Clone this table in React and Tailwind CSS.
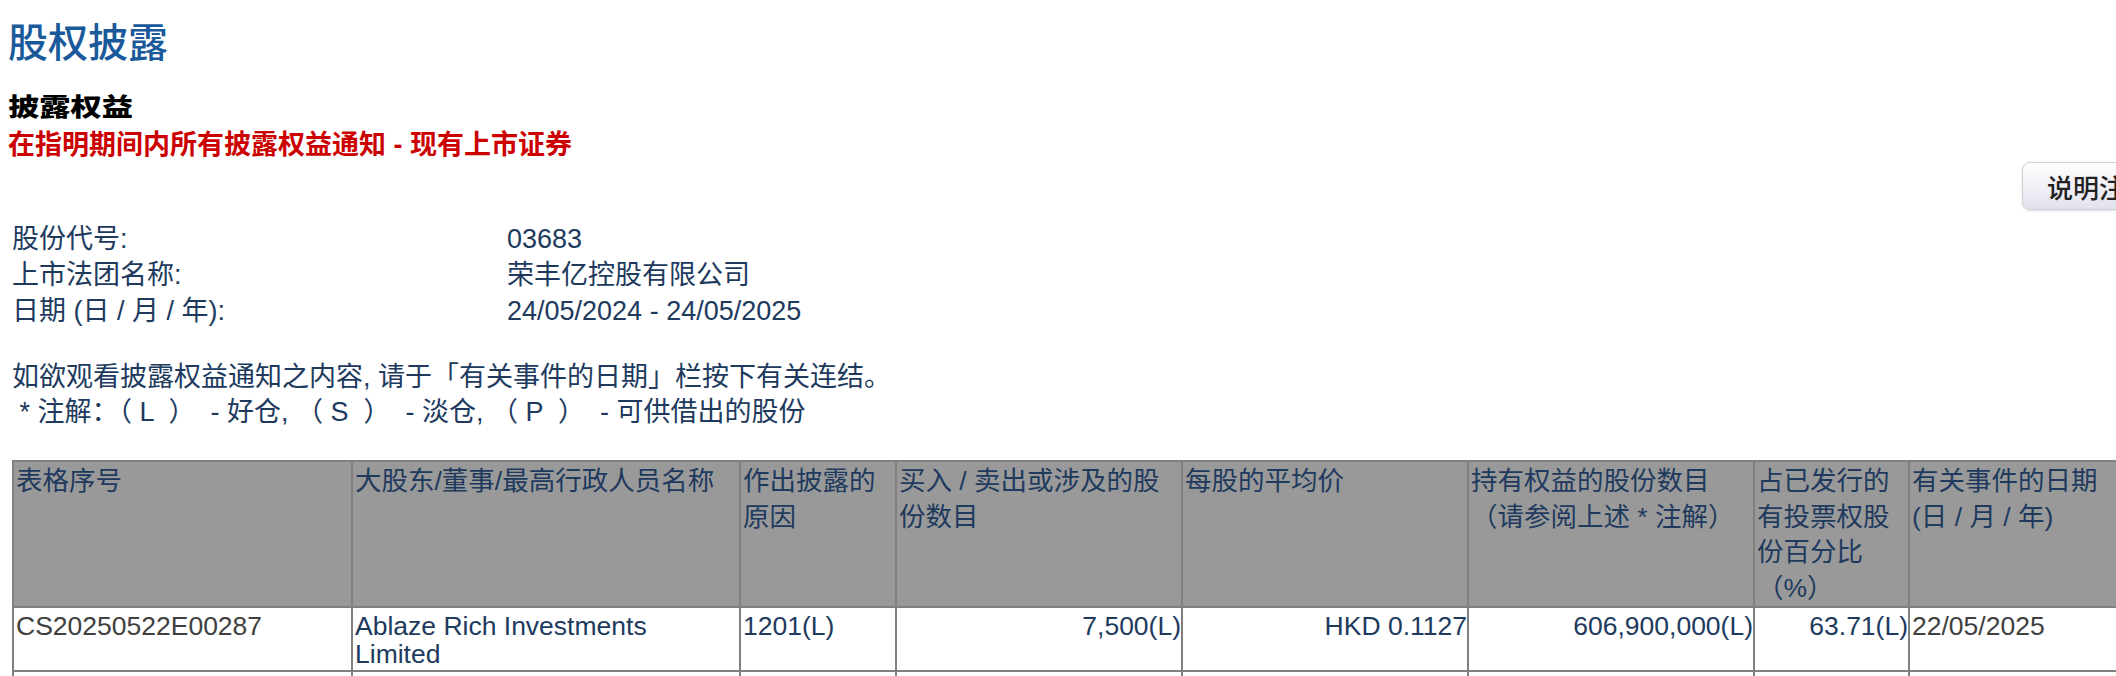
import React from 'react';

const COLS = 'grid-cols-[337px_386px_154px_284px_284px_284px_153px_240px]';

const headers = [
  '表格序号',
  '大股东/董事/最高行政人员名称',
  '作出披露的原因',
  '买入 / 卖出或涉及的股份数目',
  '每股的平均价',
  '持有权益的股份数目（请参阅上述 * 注解）',
  '占已发行的有投票权股份百分比（%）',
  null,
];

const row = [
  { v: 'CS20250522E00287', cls: 'text-[#404040]' },
  { v: 'name', cls: '' },
  { v: '1201(L)', cls: '' },
  { v: '7,500(L)', cls: 'text-right' },
  { v: 'HKD 0.1127', cls: 'text-right' },
  { v: '606,900,000(L)', cls: 'text-right' },
  { v: '63.71(L)', cls: 'text-right' },
  { v: '22/05/2025', cls: 'text-[#404040]' },
];

export default function App() {
  return (
    <div className="w-full overflow-hidden bg-white font-['Liberation_Sans','Noto_Sans_CJK_SC',sans-serif] text-[#203a5e]">
      <div className="w-[2190px] pl-[8px] pr-[14px]">
        <h1 className="pt-[20px] font-['Noto_Sans_CJK_SC',sans-serif] text-[40px] font-medium leading-[40px] text-[#1a5a9a]">
          股权披露
        </h1>
        <h2 className="mt-[33px] h-[25px] font-['Noto_Sans_CJK_SC',sans-serif] text-[25px] font-black leading-[25px] text-black">
          <span className="inline-block origin-left scale-x-125">披露权益</span>
        </h2>
        <p className="mt-[14px] text-[27px] font-bold leading-[27px] text-[#cc0000]">
          在指明期间内所有披露权益通知 - 现有上市证券
        </p>

        <div className="mt-[3px] flex justify-end">
          <button className="h-[48px] rounded-lg border border-[#cfcfd8] bg-linear-to-b from-white to-[#e2e2ee] px-[24px] font-['Noto_Sans_CJK_SC',sans-serif] text-[26px] font-medium text-[#222] shadow-sm">
            说明注释
          </button>
        </div>

        {/* stock info */}
        <div className="ml-[4px] mt-[11px] grid grid-cols-[495px_auto] text-[27px] leading-[36px]">
          <div>股份代号:</div>
          <div>03683</div>
          <div>上市法团名称:</div>
          <div>荣丰亿控股有限公司</div>
          <div>日期 (日 / 月 / 年):</div>
          <div>24/05/2024 - 24/05/2025</div>
        </div>

        <div className="ml-[4px] mt-[31px] whitespace-pre text-[27px] leading-[35px]">
          <p>如欲观看披露权益通知之内容, 请于「有关事件的日期」栏按下有关连结。</p>
          <p> * 注解：（ L  ）  - 好仓, （ S  ）  - 淡仓, （ P  ）  - 可供借出的股份</p>
        </div>

        {/* disclosure table */}
        <div className={`ml-[4px] mt-[30px] grid w-max ${COLS} gap-[2px] bg-[#808080] p-[2px] text-[26.5px]`}>
          {headers.map((h, i) => (
            <div key={i} className="bg-[#999999] px-[2px] pt-[2px] leading-[35.5px]">
              {h ?? (
                <>
                  有关事件的日期
                  <br />
                  (日 / 月 / 年)
                </>
              )}
            </div>
          ))}
          {row.map((c, i) => (
            <div key={i} className={`bg-white pb-[2px] pl-[2px] pr-0 pt-[4px] leading-[28px] ${c.cls}`}>
              {c.v === 'name' ? (
                <>
                  Ablaze Rich Investments
                  <br />
                  Limited
                </>
              ) : (
                c.v
              )}
            </div>
          ))}
          {row.map((_, i) => (
            <div key={i} className="h-[60px] bg-white">&nbsp;</div>
          ))}
        </div>
      </div>
    </div>
  );
}
